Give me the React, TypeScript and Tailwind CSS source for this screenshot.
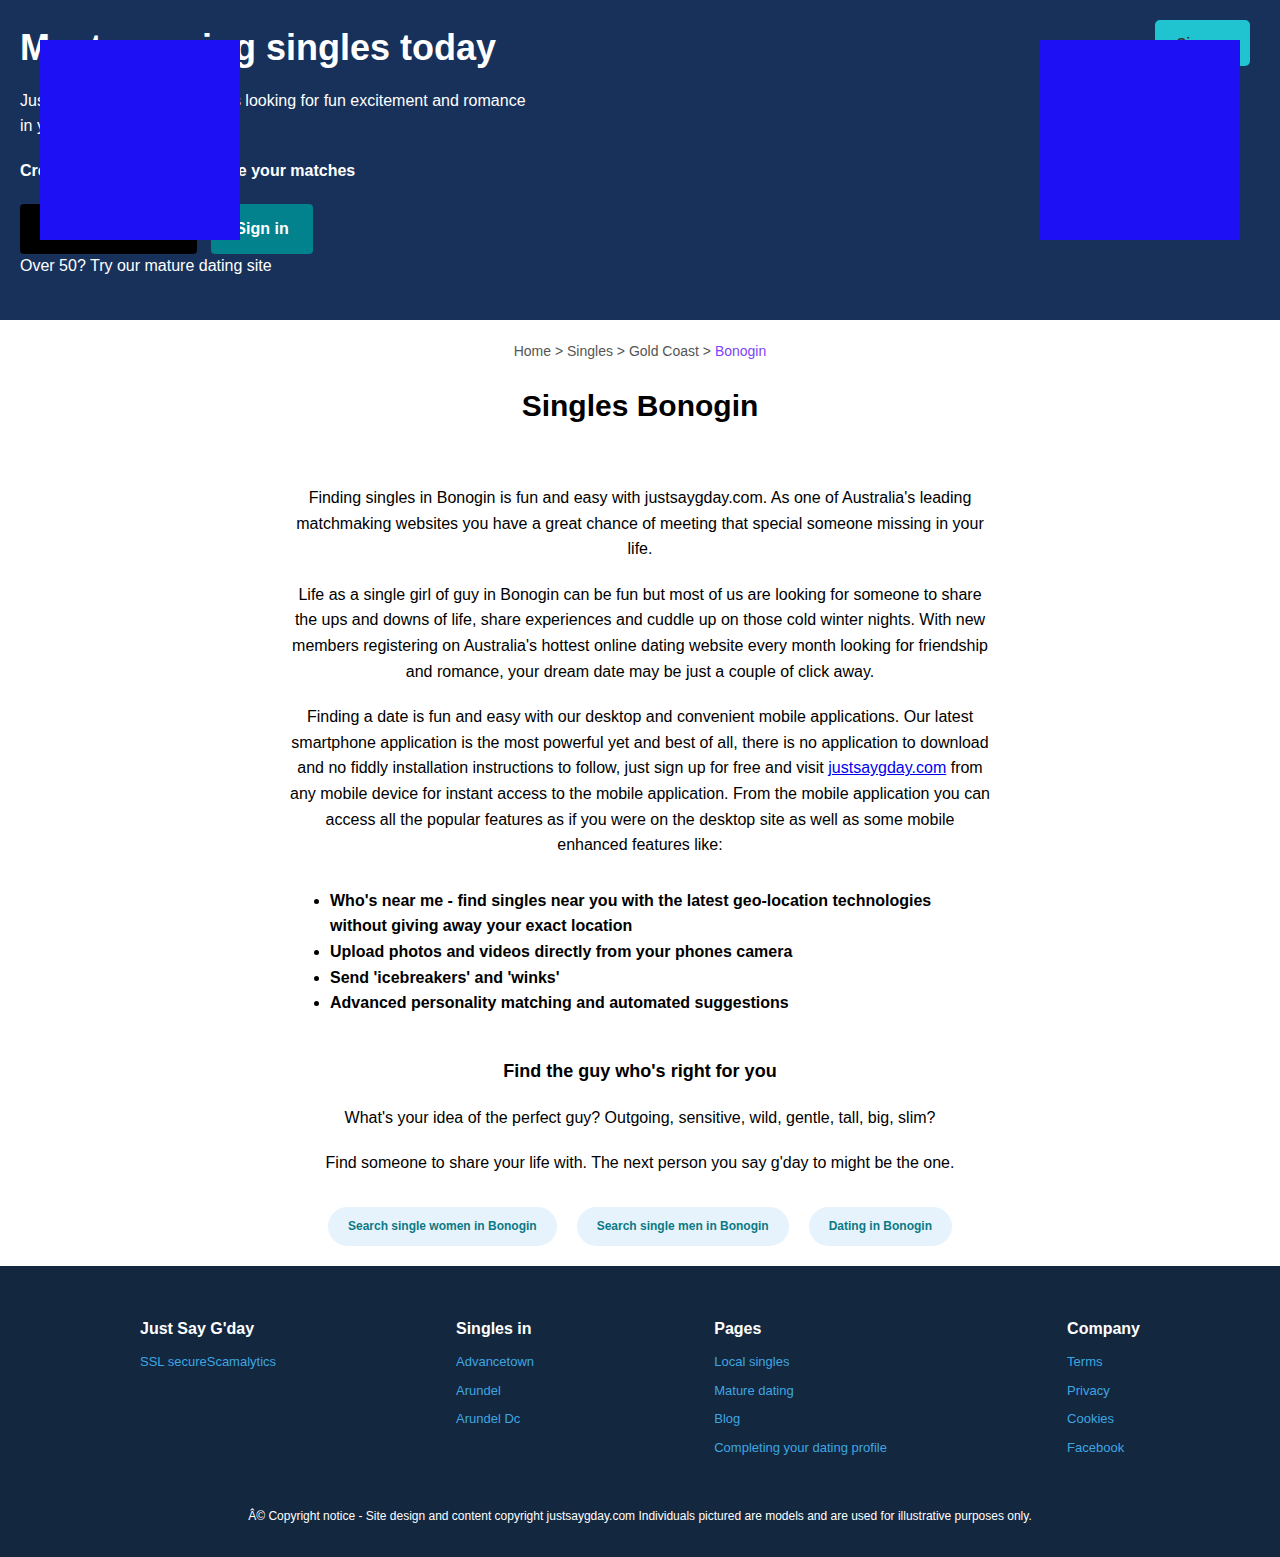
const font = { fontFamily: '"Liberation Sans", Arial, sans-serif' };

const singles = ["Advancetown", "Arundel", "Arundel Dc"];
const pages = ["Local singles", "Mature dating", "Blog", "Completing your dating profile"];
const company = ["Terms", "Privacy", "Cookies", "Facebook"];

function FooterCol({ title, links }: { title: string; links: string[] }) {
  return (
    <div>
      <h4 className="text-white font-bold text-[16px] leading-[24px] mb-[13px]">{title}</h4>
      <ul className="flex flex-col gap-[12.7px]">
        {links.map((l) => (
          <li key={l} className="text-[13px] leading-[16px] text-[#3fa6e0]">
            {l}
          </li>
        ))}
      </ul>
    </div>
  );
}

export default function App() {
  return (
    <div style={font} className="w-[1280px] min-h-[1557px] bg-white flex flex-col">
      {/* hero */}
      <header className="relative h-[320px] bg-[#18315a] px-5 pt-[26px] text-white">
        <h1 className="text-[36px] leading-[44px] font-bold">Meet amazing singles today</h1>
        <p className="mt-[18px] w-[510px] text-[16px] leading-[25px]">
          Just Say G'day is for all singles looking for fun excitement and romance in your life.
        </p>
        <p className="mt-[23px] text-[16px] leading-[20px] font-bold">Create a free account and see your matches</p>
        <div className="mt-[23px] flex gap-[14px]">
          <button className="h-[50px] w-[177px] rounded-[4px] bg-black text-white font-bold text-[16px]">
            Join for free
          </button>
          <button className="h-[50px] w-[102px] rounded-[4px] bg-[#02828c] text-white font-bold text-[16px]">
            Sign in
          </button>
        </div>
        <p className="text-[16px] leading-[24px]">Over 50? Try our mature dating site</p>

        <button className="absolute right-[30px] top-[20px] h-[46px] w-[95px] rounded-[5px] bg-[#20c4d0] text-[#333] font-bold text-[14px]">
          Sign up
        </button>
        <div className="absolute left-[40px] top-[40px] h-[200px] w-[200px] bg-[#1d10f5]" />
        <div className="absolute left-[1040px] top-[40px] h-[200px] w-[200px] bg-[#1d10f5]" />
      </header>

      {/* main */}
      <main className="flex flex-col items-center pt-[22px] pb-[20px] text-black">
        <nav className="text-[14px] leading-[18px] text-[#555]">
          Home &gt; Singles &gt; Gold Coast &gt; <span className="text-[#7b45f5]">Bonogin</span>
        </nav>
        <h1 className="mt-[28px] text-[30px] leading-[35px] font-bold">Singles Bonogin</h1>

        <div className="mt-[62px] w-[700px] text-[16px] leading-[25.6px]">
          <p className="text-center">
            Finding singles in Bonogin is fun and easy with justsaygday.com. As one of Australia's leading
            matchmaking websites you have a great chance of meeting that special someone missing in your life.
          </p>
          <p className="mt-[20px] text-center">
            Life as a single girl of guy in Bonogin can be fun but most of us are looking for someone to share the
            ups and downs of life, share experiences and cuddle up on those cold winter nights. With new members
            registering on Australia's hottest online dating website every month looking for friendship and romance,
            your dream date may be just a couple of click away.
          </p>
          <p className="mt-[20px] text-center">
            Finding a date is fun and easy with our desktop and convenient mobile applications. Our latest
            smartphone application is the most powerful yet and best of all, there is no application to download
            and no fiddly installation instructions to follow, just sign up for free and visit{" "}
            <a className="text-[#0000ee] underline">justsaygday.com</a> from any mobile device for instant access to
            the mobile application. From the mobile application you can access all the popular features as if you
            were on the desktop site as well as some mobile enhanced features like:
          </p>
          <ul className="mt-[30px] list-disc pl-[40px] font-bold">
            <li>
              Who's near me - find singles near you with the latest geo-location technologies without giving away
              your exact location
            </li>
            <li>Upload photos and videos directly from your phones camera</li>
            <li>Send 'icebreakers' and 'winks'</li>
            <li>Advanced personality matching and automated suggestions</li>
          </ul>

          <h3 className="mt-[45px] text-center text-[18px] leading-[21px] font-bold">
            Find the guy who's right for you
          </h3>
          <p className="mt-[23px] text-center">
            What's your idea of the perfect guy? Outgoing, sensitive, wild, gentle, tall, big, slim?
          </p>
          <p className="mt-[20px] text-center">
            Find someone to share your life with. The next person you say g'day to might be the one.
          </p>
        </div>

        <div className="mt-[31px] flex gap-[20px]">
          {["Search single women in Bonogin", "Search single men in Bonogin", "Dating in Bonogin"].map((t) => (
            <span
              key={t}
              className="flex h-[39px] items-center rounded-full bg-[#e6f3fc] px-[20px] text-[12px] font-bold text-[#0b7a86]"
            >
              {t}
            </span>
          ))}
        </div>
      </main>

      {/* footer */}
      <footer className="flex-1 bg-[#13273f] pt-[51px] pb-[32px]">
        <div className="mx-auto flex w-[1000px] justify-between">
          <div className="w-[255px]">
            <h4 className="text-white font-bold text-[16px] leading-[24px] mb-[13px]">Just Say G'day</h4>
            <p className="text-[13px] leading-[16px] text-[#3fa6e0]">SSL secureScamalytics</p>
          </div>
          <div className="flex flex-1 justify-between pl-[61px]">
            <FooterCol title="Singles in" links={singles} />
            <FooterCol title="Pages" links={pages} />
            <FooterCol title="Company" links={company} />
          </div>
        </div>
        <p className="mt-[52px] text-center text-[12px] leading-[16px] text-white">
          Â© Copyright notice - Site design and content copyright justsaygday.com Individuals pictured are models and
          are used for illustrative purposes only.
        </p>
      </footer>
    </div>
  );
}
